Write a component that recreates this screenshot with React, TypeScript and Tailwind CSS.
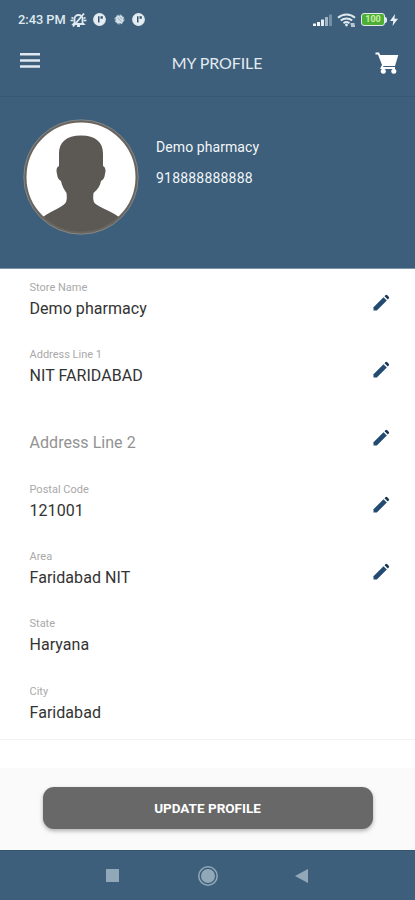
type Field = {
  label: string;
  value?: string;
  editable?: boolean;
};

const fields: Field[] = [
  { label: "Store Name", value: "Demo pharmacy", editable: true },
  { label: "Address Line 1", value: "NIT FARIDABAD", editable: true },
  { label: "Address Line 2", editable: true },
  { label: "Postal Code", value: "121001", editable: true },
  { label: "Area", value: "Faridabad NIT", editable: true },
  { label: "State", value: "Haryana" },
  { label: "City", value: "Faridabad" },
];

/* ----------------------------------------------------------------
   Icons
---------------------------------------------------------------- */
function AppDot() {
  return (
    <svg className="h-[13px] w-[13px]" viewBox="0 0 13 13">
      <circle cx="6.5" cy="6.5" r="5.700" fill="#e6eef3" stroke="#dfe9ef" strokeWidth="1.400" />
      <path d="M5 3.200h1.500v6.300H5zM7.500 3.200h2.300v2.600H7.500z" fill="#34536e" />
    </svg>
  );
}

function MenuIcon() {
  return (
    <svg className="mt-[14px] h-[15px] w-[20px]" viewBox="0 0 20 15">
      <path
        d="M0 0h20v2.500H0zM0 6.200h20v2.500H0zM0 12.300h20v2.500H0z"
        fill="#dfe9ef"
      />
    </svg>
  );
}

function CartIcon() {
  return (
    <svg className="mt-[13px] h-[23px] w-[24px]" viewBox="0 0 24 23">
      <path
        d="M.5 1.500h3l4.500 11.500-1.500 3H20"
        fill="none"
        stroke="#fff"
        strokeWidth="1.800"
      />
      <path d="M4 3h19.300l-3.300 11H7.800z" fill="#fff" />
      <circle cx="8.300" cy="19.300" r="2.500" fill="#fff" />
      <circle cx="18.800" cy="19.300" r="2.500" fill="#fff" />
    </svg>
  );
}

function PencilIcon() {
  return (
    <svg className="h-[17px] w-[17px]" viewBox="0 0 17 17" fill="#234a70">
      <path d="M.5 16.500v-3.300L10.500 3.200l3.300 3.300L3.800 16.500z" />
      <path
        d="m11.500 2.200.9-.9a1.300 1.300 0 0 1 1.900 0l1.400 1.400a1.300 1.300 0 0 1 0 1.900l-.9.9z"
        fill="#173655"
      />
    </svg>
  );
}

/* ----------------------------------------------------------------
   Status bar
---------------------------------------------------------------- */
function StatusBar() {
  return (
    <div className="flex h-[39px] items-center pr-[17px] pl-[18px]">
      <span className="w-[52px] pt-px text-[12.8px] font-medium whitespace-nowrap text-[#dfe9ef]">
        2:43 PM
      </span>
      <svg className="h-4 w-[17px]" viewBox="0 0 17 16" fill="none" stroke="#dfe9ef">
        <path d="M4.500 11V7a4 4 0 0 1 8 0v4l1 1h-10zM7 14h3" strokeWidth="1.800" />
        <path d="M3 14.500 14 1.500" strokeWidth="1.900" />
        <path d="M.5 8.500h3M1.500 5.500l2 1M13.500 8.500h3M13.500 6.500l2-1" strokeWidth="1.500" />
      </svg>
      <div className="ml-1.5 flex items-center">
        <AppDot />
        <svg className="mx-[7.500px] h-[11px] w-[11px]" viewBox="0 0 11 11">
          <circle cx="5.500" cy="5.500" r="4" fill="#d3e0e8" />
          <circle
            cx="5.500"
            cy="5.500"
            r="4.500"
            fill="none"
            stroke="#d3e0e8"
            strokeDasharray="2 1.500"
          />
          <path d="m3.500 4 4 3.500M5.500 2.800 8 5" stroke="#7d9bb1" strokeWidth=".8" />
        </svg>
        <AppDot />
      </div>
      <svg className="ml-auto h-[13px] w-[20px]" viewBox="0 0 20 13">
        <path d="M0 10.500h3V13H0zM4 9h3v4H4z" fill="#f2f6f8" />
        <path d="M8 6.500h3V13H8z" fill="#e4edf2" />
        <path d="M12 4h3v9h-3z" fill="#a5b8c7" />
        <path d="M16 1.500h3V13h-3z" fill="#7490a7" />
      </svg>
      <svg
        className="ml-1 h-[14px] w-[19px]"
        viewBox="0 0 19 14"
        fill="none"
        stroke="#dfe9ef"
        strokeWidth="2"
      >
        <path d="M1 4.800a12.500 12.500 0 0 1 17 0M3.800 7.600a8.500 8.500 0 0 1 11.400 0M6.500 10.200a4.800 4.800 0 0 1 6 0" />
        <circle cx="9.500" cy="12" r="1.400" fill="#dfe9ef" stroke="none" />
        <path d="M13.500 11h4M14 13h4" strokeWidth="1.300" />
      </svg>
      <div className="ml-[5px] flex h-[13px] w-[24px] items-center justify-center rounded-[3px] border-[1.5px] border-[#dfe9ef] bg-[#4fae35] text-[9px] leading-none font-bold text-[#c6efac]">
        100
      </div>
      <div className="h-[6px] w-[2px] rounded-r-sm bg-[#dfe9ef]" />
      <svg className="ml-[3px] h-[12px] w-[8px]" viewBox="0 0 8 12">
        <path d="M5 0 0 7h3.300L2.500 12 8 4.800H4.500z" fill="#eaf1f5" />
      </svg>
    </div>
  );
}

/* ----------------------------------------------------------------
   Profile header
---------------------------------------------------------------- */
function Avatar() {
  return (
    <svg className="h-[116px] w-[116px] shrink-0" viewBox="0 0 116 116">
      <clipPath id="avatar">
        <circle cx="58" cy="58" r="56" />
      </clipPath>
      <circle cx="58" cy="58" r="56" fill="#fff" />
      <path
        clipPath="url(#avatar)"
        fill="#5c5853"
        d="M58 16.500c-15 0-22 7-22 18V47c-2.500 1-3 4-2 8 .5 4 2 6 4 7 1 5 3 8 5.500 12 .5 5 .5 7-1 10C38 89 30 91 20 98v18h76V98c-10-7-19-9-24.500-14-1.500-3-1.500-5-1-10C75 70 77 67 78 62c2-1 3.500-3 4-7 1-4 .5-7-2-8V34.500c0-11-7-18-22-18Z"
      />
      <circle cx="58" cy="58" r="55.800" fill="none" stroke="#68645f" strokeWidth="2.600" />
      <circle cx="58" cy="58" r="57.200" fill="none" stroke="#8f908d" strokeWidth=".8" />
    </svg>
  );
}

function FieldRow({ label, value, editable }: Field) {
  return (
    <div className="flex h-[67.300px] items-start justify-between pr-[25px] pl-[29.500px]">
      <div className="pt-[11px]">
        <div className="h-[15px] text-[11px] leading-[15px] text-[#a9a9a9]">
          {value ? label : ""}
        </div>
        <div
          className={`text-[16px] leading-5 tracking-[0.05px] ${
            value ? "mt-1 text-[#333333]" : "mt-[3px] text-[#929292]"
          }`}
        >
          {value ?? label}
        </div>
      </div>
      {editable && (
        <button className="pt-[25px]" aria-label={label}>
          <PencilIcon />
        </button>
      )}
    </div>
  );
}

export default function App() {
  return (
    <div className="flex h-[900px] w-[415px] flex-col overflow-hidden bg-white font-['Roboto',sans-serif]">
      <header className="h-[269px] shrink-0 border-b border-[#7d94a8] bg-[#3d5f7b]">
        <StatusBar />
        <div className="flex h-[58px] items-start justify-between border-b border-[#375773] pr-[16px] pl-[20px]">
          <MenuIcon />
          <h1 className="mt-[12px] ml-[19px] font-['Lato',sans-serif] text-[16px] leading-6 tracking-[-0.1px] text-[#e2ebf0]">
            MY PROFILE
          </h1>
          <CartIcon />
        </div>
        <div className="flex pt-[22px] pl-[23px]">
          <Avatar />
          <div className="pt-[18px] pl-[17px] text-[14px] leading-5 text-[#f2f6f8]">
            <p className="tracking-[0.08px]">Demo pharmacy</p>
            <p className="mt-[11px] tracking-[0.2px]">918888888888</p>
          </div>
        </div>
      </header>

      <main className="h-[471px] shrink-0 border-b border-[#f3f3f3]">
        {fields.map((field) => (
          <FieldRow key={field.label} {...field} />
        ))}
      </main>

      <div className="mt-[28px] flex h-[82px] shrink-0 justify-center bg-[#fafafa] pt-[19px]">
        <button className="h-[42px] w-[330px] rounded-[11px] bg-[#686868] pt-px text-[13.500px] font-bold text-white shadow-[0_2px_4px_rgba(0,0,0,0.3)]">
          UPDATE PROFILE
        </button>
      </div>

      <nav className="flex grow items-center border-t border-[#34546f] bg-[#3d5f7b] pl-[106px]">
        <div className="h-[13px] w-[13px] bg-[#91a8b8]" />
        <svg className="ml-[79px] h-5 w-5" viewBox="0 0 20 20">
          <circle cx="10" cy="10" r="9.200" fill="none" stroke="#91a8b8" strokeWidth="1.500" />
          <circle cx="10" cy="10" r="7" fill="#91a8b8" />
        </svg>
        <svg className="ml-[77px] h-[14px] w-[13px]" viewBox="0 0 13 14">
          <path d="M13 0v14L0 7z" fill="#91a8b8" />
        </svg>
      </nav>
    </div>
  );
}
